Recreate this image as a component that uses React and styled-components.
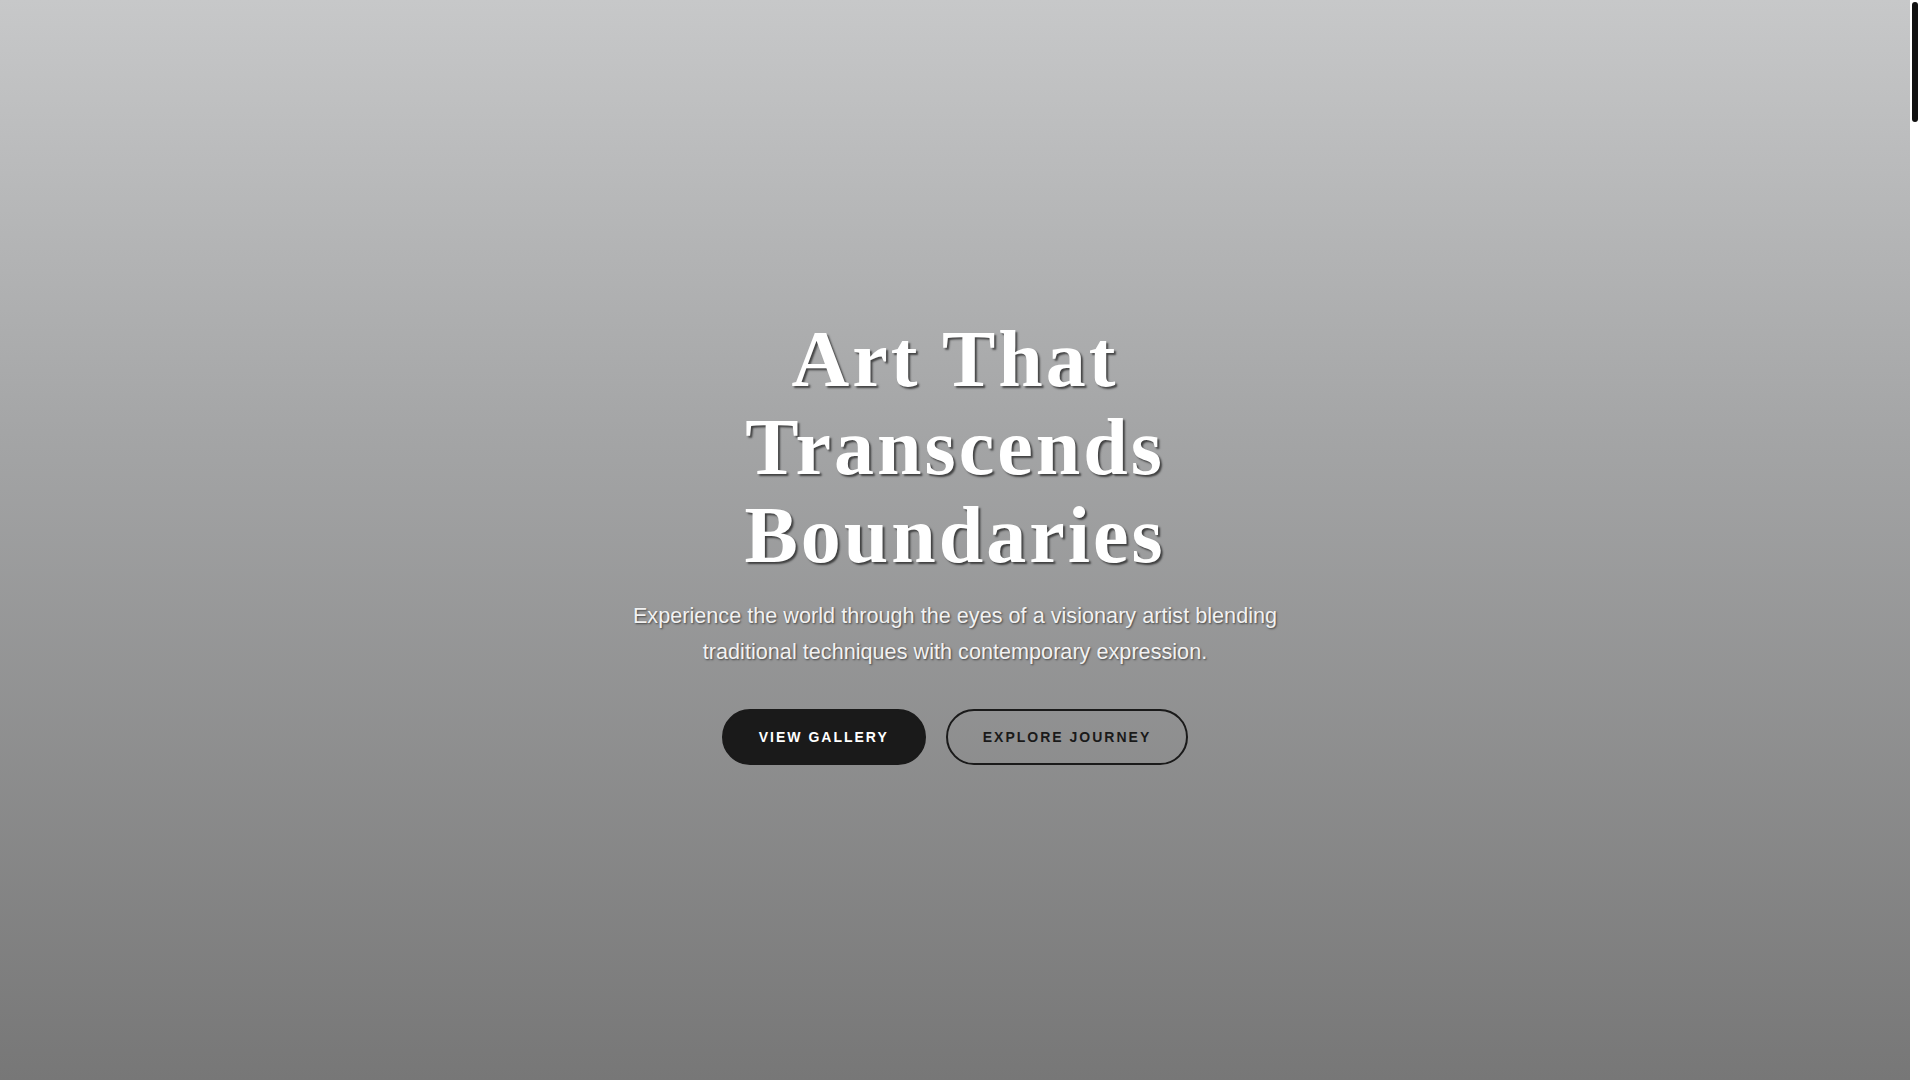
import React from "react";
import styled, { createGlobalStyle } from "styled-components";

const GlobalStyle = createGlobalStyle`
  * {
    box-sizing: border-box;
  }
  html,
  body {
    margin: 0;
    padding: 0;
    overflow: hidden;
    background: #777777;
  }
  body {
    font-family: "Liberation Sans", Arial, sans-serif;
  }
`;

const App = () => {
  return (
    <Layout>
      <GlobalStyle />
      <Main>
        <Hero>
          <HeroContent>
            <Title>Art That Transcends Boundaries</Title>
            <Subtitle>
              Experience the world through the eyes of a visionary artist
              blending traditional techniques with contemporary expression.
            </Subtitle>
            <ButtonRow>
              <HeroButton $variant="solid">View Gallery</HeroButton>
              <HeroButton $variant="outline">Explore Journey</HeroButton>
            </ButtonRow>
          </HeroContent>
        </Hero>
      </Main>
      <ScrollRail>
        <ScrollThumb />
      </ScrollRail>
    </Layout>
  );
};

const Layout = styled.div`
  display: flex;
  height: 100vh;
`;
const Main = styled.main`
  flex: 1;
  min-width: 0;
`;
const Hero = styled.section`
  height: 100vh;
  display: flex;
  align-items: center;
  justify-content: center;
  background: linear-gradient(180deg, #c7c8c9 0%, #a4a5a6 40%, #777777 100%);
`;
const HeroContent = styled.div`
  max-width: 700px;
  display: flex;
  flex-direction: column;
  align-items: center;
  text-align: center;
`;
const Title = styled.h1`
  margin: 0 0 19px;
  font-family: "Liberation Serif", "Times New Roman", serif;
  font-size: 80px;
  font-weight: 700;
  line-height: 1.1;
  letter-spacing: 3px;
  color: #ffffff;
  text-shadow: 2px 2px 2px rgba(0, 0, 0, 0.6);
`;
const Subtitle = styled.p`
  margin: 0 0 40px;
  font-size: 21.6px;
  line-height: 1.65;
  letter-spacing: 0.03px;
  color: #f2f2f2;
  text-shadow: 1px 1px 2px rgba(0, 0, 0, 0.55);
`;
const ButtonRow = styled.div`
  display: flex;
  gap: 20px;
`;
const HeroButton = styled.button`
  padding: 18px 35px;
  border-radius: 30px;
  border: 2px solid #1a1a1a;
  background: ${(p) => (p.$variant === "solid" ? "#1a1a1a" : "transparent")};
  color: ${(p) => (p.$variant === "solid" ? "#ffffff" : "#1a1a1a")};
  font-family: "Liberation Sans", Arial, sans-serif;
  font-size: 14px;
  font-weight: 700;
  line-height: 16px;
  letter-spacing: 2px;
  text-transform: uppercase;
  cursor: pointer;
`;
const ScrollRail = styled.div`
  width: 10px;
  flex-shrink: 0;
  padding: 2px;
  background: #ffffff;
`;
const ScrollThumb = styled.div`
  height: 120px;
  border-radius: 4px;
  background: #111111;
`;

export default App;
